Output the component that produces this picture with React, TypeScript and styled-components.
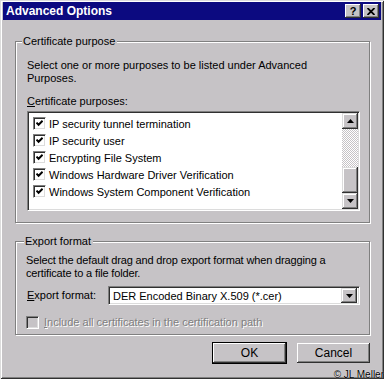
import styled, { createGlobalStyle } from 'styled-components';

const FACE = '#c6c3c6';

const GlobalStyle = createGlobalStyle`
  html, body {
    margin: 0;
    padding: 0;
    background: ${FACE};
  }
  body {
    font-family: "Liberation Sans", Arial, sans-serif;
    font-size: 11px;
    color: #000;
  }
`;

const purposes = [
  'IP security tunnel termination',
  'IP security user',
  'Encrypting File System',
  'Windows Hardware Driver Verification',
  'Windows System Component Verification',
];

const CheckMark = () => (
  <svg width="7" height="7" viewBox="0 0 7 7">
    <path d="M0.5 2.6 L2.6 4.8 L6.6 0.8" fill="none" stroke="#000" strokeWidth="2" />
  </svg>
);

const Arrow = ({ dir }: { dir: 'up' | 'down' }) => (
  <svg width="7" height="4" viewBox="0 0 7 4">
    {dir === 'up' ? (
      <path d="M3.5 0 L7 4 L0 4 Z" fill="#000" />
    ) : (
      <path d="M0 0 L7 0 L3.5 4 Z" fill="#000" />
    )}
  </svg>
);

const Underlined = ({ text }: { text: string }) => (
  <>
    <u>{text[0]}</u>
    {text.slice(1)}
  </>
);

export default function App() {
  return (
    <>
      <GlobalStyle />
      <Window>
        <TitleBar>
          <Title>Advanced Options</Title>
          <TitleButtons>
            <CaptionButton>
              <HelpGlyph>?</HelpGlyph>
            </CaptionButton>
            <CaptionButton>
              <svg width="8" height="7" viewBox="0 0 8 7">
                <path d="M0.5 0 L7.5 7 M7.5 0 L0.5 7" stroke="#000" strokeWidth="1.8" />
              </svg>
            </CaptionButton>
          </TitleButtons>
        </TitleBar>

        <Body>
          <GroupBox $top={17} $bottom={11}>
            <Legend>Certificate purpose</Legend>
            <Text>
              Select one or more purposes to be listed under Advanced
              <br />
              Purposes.
            </Text>
            <FieldLabel>
              <Underlined text="Certificate purposes:" />
            </FieldLabel>
            <ListBox>
              <ListItems>
                {purposes.map((p) => (
                  <ListRow key={p}>
                    <CheckBox>
                      <CheckMark />
                    </CheckBox>
                    <span>{p}</span>
                  </ListRow>
                ))}
              </ListItems>
              <ScrollBar>
                <ScrollButton>
                  <Arrow dir="up" />
                </ScrollButton>
                <Track />
                <Thumb />
                <ScrollButton>
                  <Arrow dir="down" />
                </ScrollButton>
              </ScrollBar>
            </ListBox>
          </GroupBox>

          <GroupBox $top={12} $bottom={5} $gap={18}>
            <Legend $left={8}>Export format</Legend>
            <Text $tight>
              Select the default drag and drop export format when dragging a
              <br />
              certificate to a file folder.
            </Text>
            <FormatRow>
              <FormatLabel>
                <Underlined text="Export format:" />
              </FormatLabel>
              <Combo>
                <ComboValue>DER Encoded Binary X.509 (*.cer)</ComboValue>
                <ComboButton>
                  <Arrow dir="down" />
                </ComboButton>
              </Combo>
            </FormatRow>
            <DisabledRow>
              <CheckBox $disabled />
              <DisabledText>
                <Underlined text="Include all certificates in the certification path" />
              </DisabledText>
            </DisabledRow>
          </GroupBox>

          <ButtonRow>
            <PushButton $default>OK</PushButton>
            <PushButton>Cancel</PushButton>
          </ButtonRow>
        </Body>

        <Copyright>© JL Meller</Copyright>
      </Window>
    </>
  );
}

const Window = styled.div`
  position: relative;
  box-sizing: border-box;
  width: 384px;
  height: 379px;
  padding: 2px 3px 3px 3px;
  display: flex;
  flex-direction: column;
  background: ${FACE};
  box-shadow: inset 1px 1px 0 #dcdcdc, inset -1px -1px 0 #303030,
    inset 2px 2px 0 #fff, inset -2px -2px 0 #808080;
`;

const TitleBar = styled.div`
  height: 18px;
  display: flex;
  align-items: center;
  justify-content: space-between;
  padding: 0 2px 0 3px;
  background: #0c0a80;
`;

const Title = styled.span`
  color: #fff;
  font-weight: bold;
  font-size: 12px;
`;

const TitleButtons = styled.div`
  display: flex;
  gap: 2px;
`;

const CaptionButton = styled.div`
  box-sizing: border-box;
  width: 16px;
  height: 14px;
  display: flex;
  align-items: center;
  justify-content: center;
  background: ${FACE};
  box-shadow: inset -1px -1px 0 #303030, inset 1px 1px 0 #fff,
    inset -2px -2px 0 #808080;
`;

const HelpGlyph = styled.span`
  font-weight: bold;
  font-size: 11px;
  line-height: 11px;
`;

const Body = styled.div`
  flex: 1;
  display: flex;
  flex-direction: column;
  padding: 21px 11px 0 12px;
`;

const GroupBox = styled.div<{ $top: number; $bottom: number; $gap?: number }>`
  position: relative;
  display: flex;
  flex-direction: column;
  margin-top: ${({ $gap }) => $gap ?? 0}px;
  padding: ${({ $top, $bottom }) => `${$top}px 9px ${$bottom}px 11px`};
  border: 1px solid #808080;
  box-shadow: inset 1px 1px 0 #fff, 1px 1px 0 #fff;
`;

const Legend = styled.span<{ $left?: number }>`
  position: absolute;
  top: -7px;
  left: ${({ $left }) => $left ?? 6}px;
  padding: 0 2px 0 1px;
  line-height: 13px;
  background: ${FACE};
`;

const Text = styled.div<{ $tight?: boolean }>`
  line-height: 13px;
  margin-left: ${({ $tight }) => ($tight ? -1 : 0)}px;
  letter-spacing: ${({ $tight }) => ($tight ? -0.15 : 0)}px;
`;

const FieldLabel = styled.div`
  margin-top: 10px;
  line-height: 13px;
`;

const ListBox = styled.div`
  box-sizing: border-box;
  height: 100px;
  margin-top: 3px;
  display: flex;
  background: #fff;
  border-top: 1px solid #808080;
  border-left: 1px solid #808080;
  border-bottom: 1px solid #fff;
  border-right: 1px solid #fff;
  box-shadow: inset 1px 1px 0 #303030, inset -1px -1px 0 #dcdcdc;
  padding: 1px;
`;

const ListItems = styled.div`
  flex: 1;
  padding: 2px 0 0 4px;
`;

const ListRow = styled.div`
  height: 17px;
  display: flex;
  align-items: center;
  gap: 3px;
  white-space: nowrap;
`;

const CheckBox = styled.div<{ $disabled?: boolean }>`
  box-sizing: border-box;
  flex: none;
  width: 13px;
  height: 13px;
  display: flex;
  align-items: center;
  justify-content: center;
  background: ${({ $disabled }) => ($disabled ? FACE : '#fff')};
  border-top: 1px solid #808080;
  border-left: 1px solid #808080;
  border-bottom: 1px solid #fff;
  border-right: 1px solid #fff;
  box-shadow: inset 1px 1px 0 #303030, inset -1px -1px 0 #dcdcdc;
`;

const ScrollBar = styled.div`
  width: 16px;
  display: flex;
  flex-direction: column;
`;

const raised = `
  box-sizing: border-box;
  background: ${FACE};
  box-shadow: inset -1px -1px 0 #303030, inset 1px 1px 0 #dcdcdc,
    inset -2px -2px 0 #808080, inset 2px 2px 0 #fff;
`;

const ScrollButton = styled.div`
  ${raised}
  height: 16px;
  display: flex;
  align-items: center;
  justify-content: center;
`;

const Track = styled.div`
  flex: 1;
  background-color: #fff;
  background-image: repeating-conic-gradient(${FACE} 0 25%, #fff 0 50%);
  background-size: 2px 2px;
`;

const Thumb = styled.div`
  ${raised}
  height: 26px;
`;

const FormatRow = styled.div`
  margin-top: 6px;
  display: flex;
  align-items: center;
`;

const FormatLabel = styled.div`
  width: 81px;
  flex: none;
  line-height: 13px;
`;

const Combo = styled.div`
  box-sizing: border-box;
  flex: 1;
  height: 19px;
  display: flex;
  align-items: center;
  padding: 2px;
  background: #fff;
  border-top: 1px solid #808080;
  border-left: 1px solid #808080;
  border-bottom: 1px solid #fff;
  border-right: 1px solid #fff;
  box-shadow: inset 1px 1px 0 #303030, inset -1px -1px 0 #dcdcdc;
`;

const ComboValue = styled.span`
  flex: 1;
  padding-left: 2px;
`;

const ComboButton = styled.div`
  ${raised}
  width: 16px;
  height: 15px;
  display: flex;
  align-items: center;
  justify-content: center;
`;

const DisabledRow = styled.div`
  margin-top: 11px;
  display: flex;
  align-items: center;
  gap: 5px;
  margin-left: -1px;
`;

const DisabledText = styled.span`
  line-height: 13px;
  color: #808080;
  text-shadow: 1px 1px 0 #fff;
`;

const ButtonRow = styled.div`
  display: flex;
  justify-content: flex-end;
  gap: 9px;
  margin: 7px -1px 0 0;
`;

const PushButton = styled.div<{ $default?: boolean }>`
  box-sizing: border-box;
  width: 75px;
  height: 22px;
  display: flex;
  align-items: center;
  justify-content: center;
  font-size: 12px;
  background: ${FACE};
  border: 1px solid ${({ $default }) => ($default ? '#000' : 'transparent')};
  box-shadow: inset -1px -1px 0 #303030, inset 1px 1px 0 #fff,
    inset -2px -2px 0 #808080;
`;

const Copyright = styled.span`
  position: absolute;
  right: 0;
  bottom: -1px;
  font-size: 10px;
  line-height: 10px;
  color: #000;
  text-shadow: 0 0 1px #fff;
`;
